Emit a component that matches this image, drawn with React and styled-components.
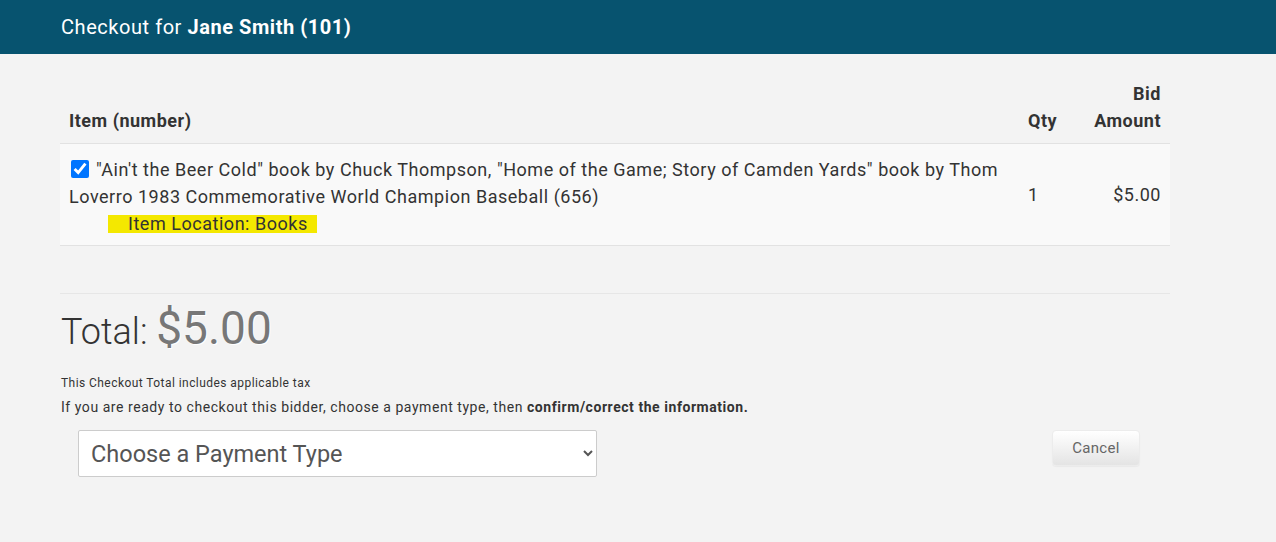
import React from "react";
import styled, { createGlobalStyle } from "styled-components";

const Global = createGlobalStyle`
  html, body { margin: 0; padding: 0; background: #f3f3f3; }
  body { font-family: Roboto, "Liberation Sans", sans-serif; color: #333; }
`;

const TopBar = styled.header`
  height: 54px;
  background: #07536f;
  color: #fff;
  display: flex;
  align-items: center;
  padding-left: 61px;
  font-size: 20px;
  letter-spacing: 0.55px;
  padding-bottom: 1px;
  box-sizing: border-box;
  b { font-weight: 700; }
`;

const Main = styled.main`
  width: 1110px;
  margin-left: 60px;
  padding-top: 17px;
`;

const Table = styled.table`
  width: 100%;
  border-collapse: collapse;
  table-layout: fixed;
`;

const Th = styled.th`
  text-align: ${(p) => p.$align || "left"};
  vertical-align: bottom;
  font-size: 18px;
  font-weight: 700;
  letter-spacing: 0.5px;
  line-height: 27px;
  padding: 9px 9px 9px;
  color: #333;
  border-bottom: 1px solid #e2e2e2;
`;

const Row = styled.tr`
  background: #f9f9f9;
`;

const Td = styled.td`
  text-align: ${(p) => p.$align || "left"};
  vertical-align: middle;
  font-size: 18px;
  letter-spacing: 0.53px;
  line-height: 27px;
  padding: ${(p) => (p.$main ? "12px 9px 8px" : "9px 9px 10px")};
  color: #333;
  border-bottom: 1px solid #e2e2e2;
`;

const Check = styled.input`
  width: 18px;
  height: 18px;
  margin: 0 7px 0 2px;
  vertical-align: -2px;
  accent-color: #0075ff;
`;

const Location = styled.span`
  display: inline-block;
  margin-left: 39px;
  padding: 0 9px 0 20px;
  border-radius: 2px 4px 3px 2px;
  background: linear-gradient(
    to bottom,
    transparent 0,
    transparent 5px,
    #f4e800 5px,
    #f4e800 23px,
    transparent 23px
  );
`;

const Rule = styled.hr`
  border: 0;
  border-top: 1px solid #e6e6e6;
  margin: 47px 0 0;
`;

const TotalLine = styled.h1`
  margin: 8px 0 0 1px;
  font-weight: 300;
  font-size: 36px;
  line-height: 52px;
  color: #333;
`;

const TotalAmount = styled.span`
  font-size: 46px;
  font-weight: 400;
  color: #777;
  text-shadow: 1px 1px 0 #fff;
`;

const TaxNote = styled.p`
  margin: 17px 0 0 1px;
  font-size: 12px;
  letter-spacing: 0.44px;
  line-height: 17px;
`;

const Instruction = styled.p`
  margin: 5px 0 0 1px;
  font-size: 14px;
  letter-spacing: 0.55px;
  line-height: 20px;
  b { font-weight: 700; }
`;

const Actions = styled.div`
  display: flex;
  justify-content: space-between;
  align-items: flex-start;
  margin-top: 13px;
  padding: 0 30px 0 18px;
`;

const Select = styled.select`
  width: 519px;
  height: 47px;
  font-family: Roboto, "Liberation Sans", sans-serif;
  font-size: 23.5px;
  color: #555;
  background: #fff;
  border: 1px solid #ccc;
  border-radius: 2px;
  padding: 0 8px 0 8px;
`;

const CancelButton = styled.button`
  width: 88px;
  height: 36px;
  font-family: Roboto, "Liberation Sans", sans-serif;
  font-size: 15px;
  letter-spacing: 0.3px;
  color: #666;
  border: 1px solid #ececec;
  border-radius: 4px;
  background: linear-gradient(to bottom, #ffffff, #e4e4e4);
  box-shadow: 0 1px 1px rgba(0, 0, 0, 0.04);
`;

export default function App() {
  return (
    <>
      <Global />
      <TopBar>
        <span>
          Checkout for&nbsp;<b>Jane Smith (101)</b>
        </span>
      </TopBar>
      <Main>
        <Table>
          <colgroup>
            <col />
            <col style={{ width: "58px" }} />
            <col style={{ width: "93px" }} />
          </colgroup>
          <thead>
            <tr>
              <Th>Item (number)</Th>
              <Th>Qty</Th>
              <Th $align="right">
                Bid
                <br />
                Amount
              </Th>
            </tr>
          </thead>
          <tbody>
            <Row>
              <Td $main>
                <Check type="checkbox" defaultChecked />
                "Ain't the Beer Cold" book by Chuck Thompson, "Home of the Game; Story of Camden Yards" book by Thom Loverro 1983 Commemorative World Champion Baseball (656)
                <br />
                <Location>Item Location: Books</Location>
              </Td>
              <Td>1</Td>
              <Td $align="right">$5.00</Td>
            </Row>
          </tbody>
        </Table>
        <Rule />
        <TotalLine>
          Total: <TotalAmount>$5.00</TotalAmount>
        </TotalLine>
        <TaxNote>This Checkout Total includes applicable tax</TaxNote>
        <Instruction>
          If you are ready to checkout this bidder, choose a payment type, then{" "}
          <b>confirm/correct the information.</b>
        </Instruction>
        <Actions>
          <Select defaultValue="">
            <option value="">Choose a Payment Type</option>
            <option value="cash">Cash</option>
            <option value="check">Check</option>
            <option value="card">Credit Card</option>
          </Select>
          <CancelButton type="button">Cancel</CancelButton>
        </Actions>
      </Main>
    </>
  );
}
